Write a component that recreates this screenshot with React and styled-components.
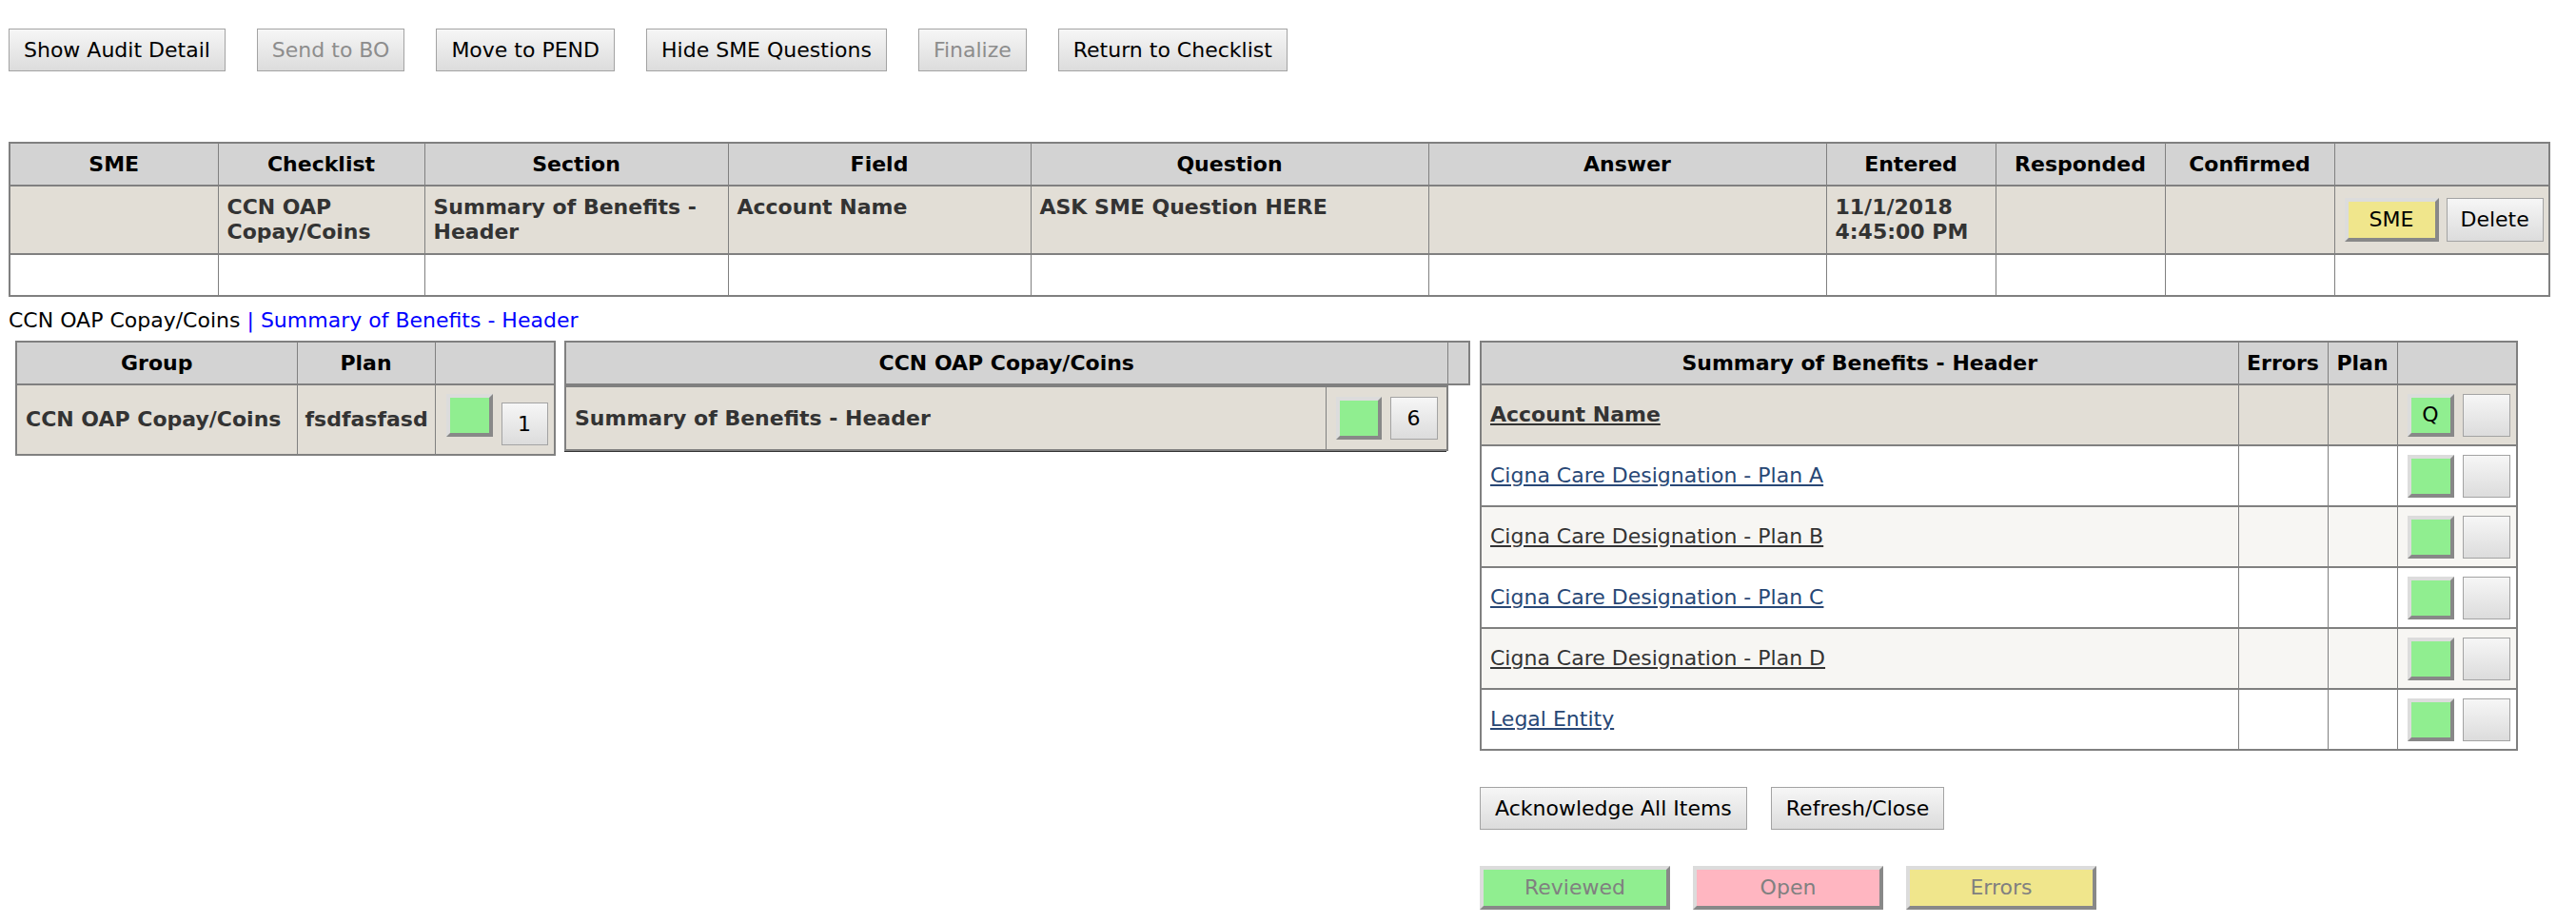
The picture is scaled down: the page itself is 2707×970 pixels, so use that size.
import React from 'react';
import styled, { createGlobalStyle } from 'styled-components';

const GlobalStyle = createGlobalStyle`
  html, body { margin: 0; padding: 0; background: #fff; }
  body {
    font-family: "DejaVu Sans", Verdana, "Liberation Sans", sans-serif;
    font-size: 22px;
    color: #000;
  }
  *, *::before, *::after { box-sizing: border-box; }
`;

const Page = styled.div`
  padding: 30px 29px 0 9px;
`;

const Toolbar = styled.div`
  display: flex;
  gap: 33px;
  margin-bottom: 74px;
`;

const Btn = styled.button`
  height: ${p => p.$h || 45}px;
  width: ${p => (p.$w ? `${p.$w}px` : 'auto')};
  padding: 0 ${p => (p.$pad ?? 15)}px;
  margin: ${p => (p.$drop ? `${p.$drop}px 0 0 0` : '0')};
  font-family: inherit;
  font-size: 22px;
  line-height: 1;
  color: ${p => (p.disabled ? '#8d8d8d' : '#000')};
  background: linear-gradient(to bottom, #f6f6f6 0%, #dcdcdc 100%);
  border: 1px solid #a3a3a3;
  border-radius: 0;
  white-space: nowrap;
  flex: none;
`;

const StatusBtn = styled.button`
  width: ${p => p.$w}px;
  height: ${p => p.$h || 45}px;
  padding: 0;
  margin: 0;
  border: 4px solid;
  border-color: #dcdcdc #888 #888 #dcdcdc;
  background: ${p => p.$bg};
  font-family: inherit;
  font-size: 22px;
  line-height: 1;
  color: ${p => p.$fg || '#000'};
  flex: none;
`;

const Table = styled.table`
  border-collapse: collapse;
  table-layout: fixed;
  width: ${p => p.$w}px;
  border: 2px solid #808080;
  ${p => (p.$noTop ? 'border-top: 0;' : '')}
`;

const HeadCell = styled.th`
  background: #d3d3d3;
  border: 2px solid #808080;
  border-left-width: 1.5px;
  border-right-width: 1.5px;
  padding: 8.5px 6px;
  line-height: 26px;
  font-weight: bold;
  text-align: center;
  color: #000;
  white-space: nowrap;
`;

const Row = styled.tr`
  background: ${p => p.$bg || '#fff'};
`;

const Cell = styled.td`
  border: 2px solid #808080;
  border-left-width: 1.5px;
  border-right-width: 1.5px;
  padding: ${p => p.$pad || '9px'};
  line-height: 26px;
  font-weight: bold;
  color: #333;
  vertical-align: ${p => p.$va || 'top'};
  white-space: ${p => (p.$nowrap ? 'nowrap' : 'normal')};
  overflow: visible;
`;

const Actions = styled.div`
  display: flex;
  align-items: flex-start;
  gap: ${p => p.$gap ?? 9}px;
`;

const Crumbs = styled.div`
  margin-top: 12px;
  line-height: 26px;
  color: #000;
`;

const CrumbSep = styled.span`
  color: #0000ff;
`;

const CrumbLink = styled.a`
  color: #0000ff;
  text-decoration: none;
`;

const Lower = styled.div`
  display: flex;
  align-items: flex-start;
  margin-top: 8px;
  padding-left: 7px;
`;

const MidBlock = styled.div`
  width: 950px;
  margin-left: 9px;
  flex: none;
`;

const MidBody = styled.div`
  width: 927px;
  border-bottom: 1.5px solid #333;
`;

const RightCol = styled.div`
  margin-left: 12px;
  display: flex;
  flex-direction: column;
  align-items: flex-start;
  flex: none;
`;

const BtnRow = styled.div`
  display: flex;
  gap: ${p => p.$gap}px;
  margin-top: 38px;
`;

const ItemLink = styled.a`
  color: ${p => p.$c || '#284775'};
  text-decoration: underline;
  font-weight: ${p => (p.$bold ? 'bold' : 'normal')};
`;

const GREEN = '#90ee90';
const PINK = '#ffb6c1';
const KHAKI = '#f0e68c';
const BEIGE = '#e2ded6';
const LIGHT = '#f7f6f3';

const topCols = [219, 217, 319, 318, 418, 418, 178, 178, 178, 226];
const topHeads = ['SME', 'Checklist', 'Section', 'Field', 'Question', 'Answer', 'Entered', 'Responded', 'Confirmed', ''];

const items = [
  { label: 'Cigna Care Designation - Plan A', bg: '#fff', c: '#284775' },
  { label: 'Cigna Care Designation - Plan B', bg: LIGHT, c: '#333' },
  { label: 'Cigna Care Designation - Plan C', bg: '#fff', c: '#284775' },
  { label: 'Cigna Care Designation - Plan D', bg: LIGHT, c: '#333' },
  { label: 'Legal Entity', bg: '#fff', c: '#284775' },
];

export default function App() {
  return (
    <Page>
      <GlobalStyle />
      <Toolbar>
        <Btn>Show Audit Detail</Btn>
        <Btn disabled>Send to BO</Btn>
        <Btn>Move to PEND</Btn>
        <Btn>Hide SME Questions</Btn>
        <Btn disabled>Finalize</Btn>
        <Btn>Return to Checklist</Btn>
      </Toolbar>

      <Table $w={2669}>
        <colgroup>
          {topCols.map((w, i) => <col key={i} style={{ width: w }} />)}
        </colgroup>
        <thead>
          <tr>
            {topHeads.map((h, i) => <HeadCell key={i}>{h || '\u00a0'}</HeadCell>)}
          </tr>
        </thead>
        <tbody>
          <Row $bg={BEIGE}>
            <Cell>{'\u00a0'}</Cell>
            <Cell>CCN OAP Copay/Coins</Cell>
            <Cell>Summary of Benefits - Header</Cell>
            <Cell>Account Name</Cell>
            <Cell>ASK SME Question HERE</Cell>
            <Cell>{'\u00a0'}</Cell>
            <Cell>11/1/2018 4:45:00 PM</Cell>
            <Cell>{'\u00a0'}</Cell>
            <Cell>{'\u00a0'}</Cell>
            <Cell $pad="12px 9px 9px 10px">
              <Actions $gap={8}>
                <StatusBtn $w={99} $h={46} $bg={KHAKI}>SME</StatusBtn>
                <Btn $h={46} $pad={14}>Delete</Btn>
              </Actions>
            </Cell>
          </Row>
          <Row>
            {topCols.map((_, i) => <Cell key={i} $pad="8px 9px">{'\u00a0'}</Cell>)}
          </Row>
        </tbody>
      </Table>

      <Crumbs>
        CCN OAP Copay/Coins <CrumbSep>|</CrumbSep> <CrumbLink href="#">Summary of Benefits - Header</CrumbLink>
      </Crumbs>

      <Lower>
        <Table $w={566}>
          <colgroup>
            <col style={{ width: 295 }} />
            <col style={{ width: 145 }} />
            <col style={{ width: 126 }} />
          </colgroup>
          <thead>
            <tr>
              <HeadCell>Group</HeadCell>
              <HeadCell>Plan</HeadCell>
              <HeadCell>{'\u00a0'}</HeadCell>
            </tr>
          </thead>
          <tbody>
            <Row $bg={BEIGE}>
              <Cell $va="middle" $nowrap $pad="0 6px 0 9px">CCN OAP Copay/Coins</Cell>
              <Cell $va="middle" $nowrap $pad="0 4px 0 8px">fsdfasfasd</Cell>
              <Cell $pad="9px 6px 9px 11px">
                <Actions>
                  <StatusBtn $w={49} $bg={GREEN} />
                  <Btn $w={49} $pad={0} $drop={9}>1</Btn>
                </Actions>
              </Cell>
            </Row>
          </tbody>
        </Table>

        <MidBlock>
          <Table $w={950}>
            <colgroup>
              <col style={{ width: 927 }} />
              <col style={{ width: 23 }} />
            </colgroup>
            <thead>
              <tr>
                <HeadCell>CCN OAP Copay/Coins</HeadCell>
                <HeadCell>{'\u00a0'}</HeadCell>
              </tr>
            </thead>
          </Table>
          <MidBody>
            <Table $w={927} $noTop>
              <colgroup>
                <col style={{ width: 799 }} />
                <col style={{ width: 128 }} />
              </colgroup>
              <tbody>
                <Row $bg={BEIGE}>
                  <Cell $va="middle" $pad="0 9px">Summary of Benefits - Header</Cell>
                  <Cell $pad="10px 8px 10px 10px">
                    <Actions>
                      <StatusBtn $w={48} $bg={GREEN} />
                      <Btn $w={50} $pad={0}>6</Btn>
                    </Actions>
                  </Cell>
                </Row>
              </tbody>
            </Table>
          </MidBody>
        </MidBlock>

        <RightCol>
          <Table $w={1089}>
            <colgroup>
              <col style={{ width: 796 }} />
              <col style={{ width: 94 }} />
              <col style={{ width: 73 }} />
              <col style={{ width: 126 }} />
            </colgroup>
            <thead>
              <tr>
                <HeadCell>Summary of Benefits - Header</HeadCell>
                <HeadCell>Errors</HeadCell>
                <HeadCell>Plan</HeadCell>
                <HeadCell>{'\u00a0'}</HeadCell>
              </tr>
            </thead>
            <tbody>
              <Row $bg={BEIGE}>
                <Cell $va="middle" $pad="0 9px">
                  <ItemLink href="#" $bold $c="#333">Account Name</ItemLink>
                </Cell>
                <Cell>{'\u00a0'}</Cell>
                <Cell>{'\u00a0'}</Cell>
                <Cell $pad="8.5px 8px 8.5px 10px">
                  <Actions>
                    <StatusBtn $w={49} $bg={GREEN}>Q</StatusBtn>
                    <Btn $w={50} $pad={0} />
                  </Actions>
                </Cell>
              </Row>
              {items.map(it => (
                <Row key={it.label} $bg={it.bg}>
                  <Cell $va="middle" $pad="0 9px">
                    <ItemLink href="#" $c={it.c}>{it.label}</ItemLink>
                  </Cell>
                  <Cell>{'\u00a0'}</Cell>
                  <Cell>{'\u00a0'}</Cell>
                  <Cell $pad="8.5px 8px 8.5px 10px">
                    <Actions>
                      <StatusBtn $w={49} $bg={GREEN} />
                      <Btn $w={50} $pad={0} />
                    </Actions>
                  </Cell>
                </Row>
              ))}
            </tbody>
          </Table>

          <BtnRow $gap={25}>
            <Btn>Acknowledge All Items</Btn>
            <Btn>Refresh/Close</Btn>
          </BtnRow>

          <BtnRow $gap={24}>
            <StatusBtn $w={200} $h={46} $bg={GREEN} $fg="#808080">Reviewed</StatusBtn>
            <StatusBtn $w={200} $h={46} $bg={PINK} $fg="#808080">Open</StatusBtn>
            <StatusBtn $w={200} $h={46} $bg={KHAKI} $fg="#808080">Errors</StatusBtn>
          </BtnRow>
        </RightCol>
      </Lower>
    </Page>
  );
}
